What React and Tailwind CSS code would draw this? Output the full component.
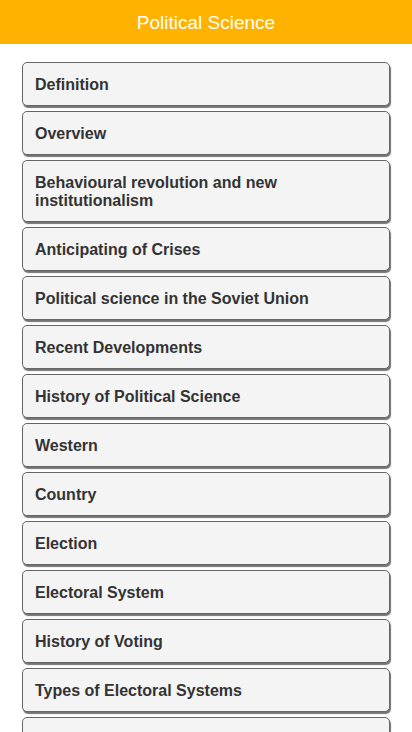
import React from "react";

const topics = [
  "Definition",
  "Overview",
  "Behavioural revolution and new institutionalism",
  "Anticipating of Crises",
  "Political science in the Soviet Union",
  "Recent Developments",
  "History of Political Science",
  "Western",
  "Country",
  "Election",
  "Electoral System",
  "History of Voting",
  "Types of Electoral Systems",
  "Voting Methods",
];

const App = () => {
  return (
    <div className="min-h-screen bg-white" style={{ fontFamily: '"Liberation Sans", Arial, sans-serif' }}>
      <div className="h-[44px] bg-[#ffb300] flex items-center justify-center">
        <h1 className="text-[19px] text-white font-normal pt-[3px]">Political Science</h1>
      </div>
      <div className="px-[22px] pt-[18px] pb-4 flex flex-col gap-[5px]">
        {topics.map((topic, index) => (
          <button
            key={index}
            className="w-full text-left bg-[#f4f4f4] border border-[#666] rounded-[5px] shadow-[1px_2px_1px_rgba(0,0,0,0.55)] px-[12px] pt-[13px] pb-[11px] text-[16px] leading-[18px] font-bold text-[#333]"
          >
            {topic}
          </button>
        ))}
      </div>
    </div>
  );
};

export default App;
